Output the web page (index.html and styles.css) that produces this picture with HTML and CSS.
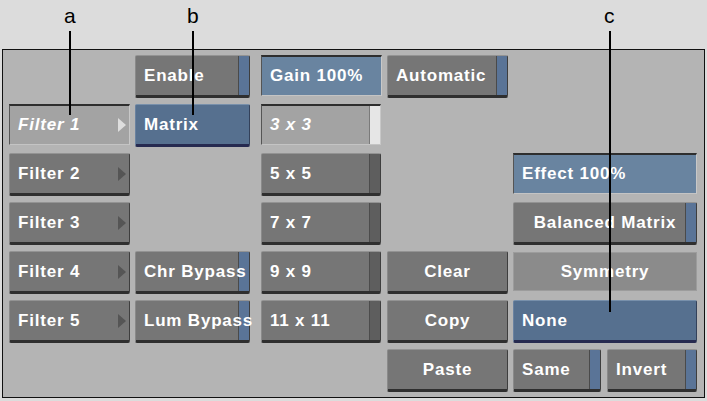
FILE: index.html
```html
<!DOCTYPE html>
<html lang="en">
<head>
  <meta charset="UTF-8">
  <title>Matrix Filter</title>
  <link rel="stylesheet" href="styles.css">
</head>
<body>

  <div id="callouts">
    <span class="tag" id="tagA">a</span>
    <span class="tag" id="tagB">b</span>
    <span class="tag" id="tagC">c</span>
    <div class="leader" id="lineA"></div>
    <div class="leader" id="lineB"></div>
    <div class="leader" id="lineC"></div>
  </div>

  <div id="panel">
    <!-- row 1 -->
    <div></div>
    <div class="btn toggle narrow">Enable</div>
    <div class="field blue">Gain 100%</div>
    <div class="btn toggle">Automatic</div>
    <div></div>

    <!-- row 2 -->
    <div class="field gray italic menu lit">Filter 1</div>
    <div class="btn blue narrow">Matrix</div>
    <div class="field gray italic white-strip">3 x 3</div>
    <div></div>
    <div></div>

    <!-- row 3 -->
    <div class="btn menu">Filter 2</div>
    <div></div>
    <div class="btn dark-strip">5 x 5</div>
    <div></div>
    <div class="field blue">Effect 100%</div>

    <!-- row 4 -->
    <div class="btn menu">Filter 3</div>
    <div></div>
    <div class="btn dark-strip">7 x 7</div>
    <div></div>
    <div class="btn toggle center">Balanced Matrix</div>

    <!-- row 5 -->
    <div class="btn menu">Filter 4</div>
    <div class="btn toggle narrow">Chr Bypass</div>
    <div class="btn dark-strip">9 x 9</div>
    <div class="btn center">Clear</div>
    <div class="label">Symmetry</div>

    <!-- row 6 -->
    <div class="btn menu">Filter 5</div>
    <div class="btn toggle narrow">Lum Bypass</div>
    <div class="btn dark-strip">11 x 11</div>
    <div class="btn center">Copy</div>
    <div class="btn blue">None</div>

    <!-- row 7 -->
    <div></div>
    <div></div>
    <div></div>
    <div class="btn center">Paste</div>
    <div class="pair">
      <div class="btn toggle">Same</div>
      <div class="btn toggle">Invert</div>
    </div>
  </div>

</body>
</html>
```

FILE: styles.css
```css
body {
  margin: 0;
  background: #dcdcdc;
  font-family: "Liberation Sans", Arial, sans-serif;
  width: 707px;
  height: 401px;
  overflow: hidden;
  position: relative;
}

/* callout letters and leader lines drawn over the panel */
#callouts .tag {
  position: absolute;
  top: 4px;
  font-size: 21px;
  color: #000;
  z-index: 2;
}

#tagA { left: 64px; }
#tagB { left: 187px; }
#tagC { left: 604px; }

.leader {
  position: absolute;
  top: 31px;
  width: 2px;
  background: #000;
  z-index: 2;
}

#lineA { left: 69px; height: 84px; }
#lineB { left: 192px; height: 84px; }
#lineC { left: 609px; height: 281px; }

#panel {
  margin: 49px 0 0 2px;
  width: 689px;
  height: 342px;
  border: 1px solid #111;
  background: #b4b4b4;
  padding: 5px 6px 0 6px;
  display: grid;
  grid-template-columns: repeat(4, 121px) 184px;
  grid-template-rows: repeat(7, 43px);
  column-gap: 5px;
  row-gap: 6px;
}

.btn, .field, .label {
  box-sizing: border-box;
  display: flex;
  align-items: center;
  padding-left: 8px;
  color: #fff;
  font-weight: bold;
  font-size: 17px;
  letter-spacing: 0.8px;
  white-space: nowrap;
  position: relative;
}

.btn {
  background: #767676;
  border-top: 1px solid #939393;
  border-left: 1px solid #8a8a8a;
  border-right: 1px solid #3e3e3e;
  border-bottom: 3px solid #2f2f2f;
  border-radius: 2px;
}

.narrow { width: 115px; }

.btn.toggle {
  background: linear-gradient(to left, #5a7497 0 10px, #4a4a4a 10px 11px, #767676 11px);
  border-bottom-color: #2f2f2f;
}

.btn.dark-strip {
  background: linear-gradient(to left, #5e5e5e 0 10px, #4c4c4c 10px 11px, #767676 11px);
  width: 120px;
}

.btn.blue {
  background: #56708f;
  border-top-color: #7890ab;
  border-left-color: #6a82a0;
  border-right-color: #33415a;
  border-bottom-color: #262a50;
}

.center {
  justify-content: center;
  padding-left: 0;
}

.field {
  border-top: 2px solid #2e2e2e;
  border-left: 1px solid #555;
  border-right: 1px solid #c8c8c8;
  border-bottom: 1px solid #c4c4c4;
  height: 41px;
}

.field.blue { background: #6984a0; }
.field.gray { background: #a3a3a3; }

.field.white-strip {
  background: linear-gradient(to left, #e6e6e6 0 10px, #7a7a7a 10px 11px, #a3a3a3 11px);
  width: 120px;
}

.italic {
  font-style: italic;
}

.menu::after {
  content: "";
  position: absolute;
  right: 3px;
  top: 50%;
  margin-top: -7px;
  border-left: 8px solid #555;
  border-top: 7px solid transparent;
  border-bottom: 7px solid transparent;
}

.menu.lit::after {
  border-left-color: #dedede;
}

.label {
  background: #8b8b8b;
  border: 1px solid #9c9c9c;
  justify-content: center;
  padding-left: 0;
  height: 39px;
  margin-top: 1px;
}

.pair {
  display: flex;
  gap: 6px;
}

.pair .btn:first-child { width: 88px; }
.pair .btn:last-child { flex: 1; }
```
